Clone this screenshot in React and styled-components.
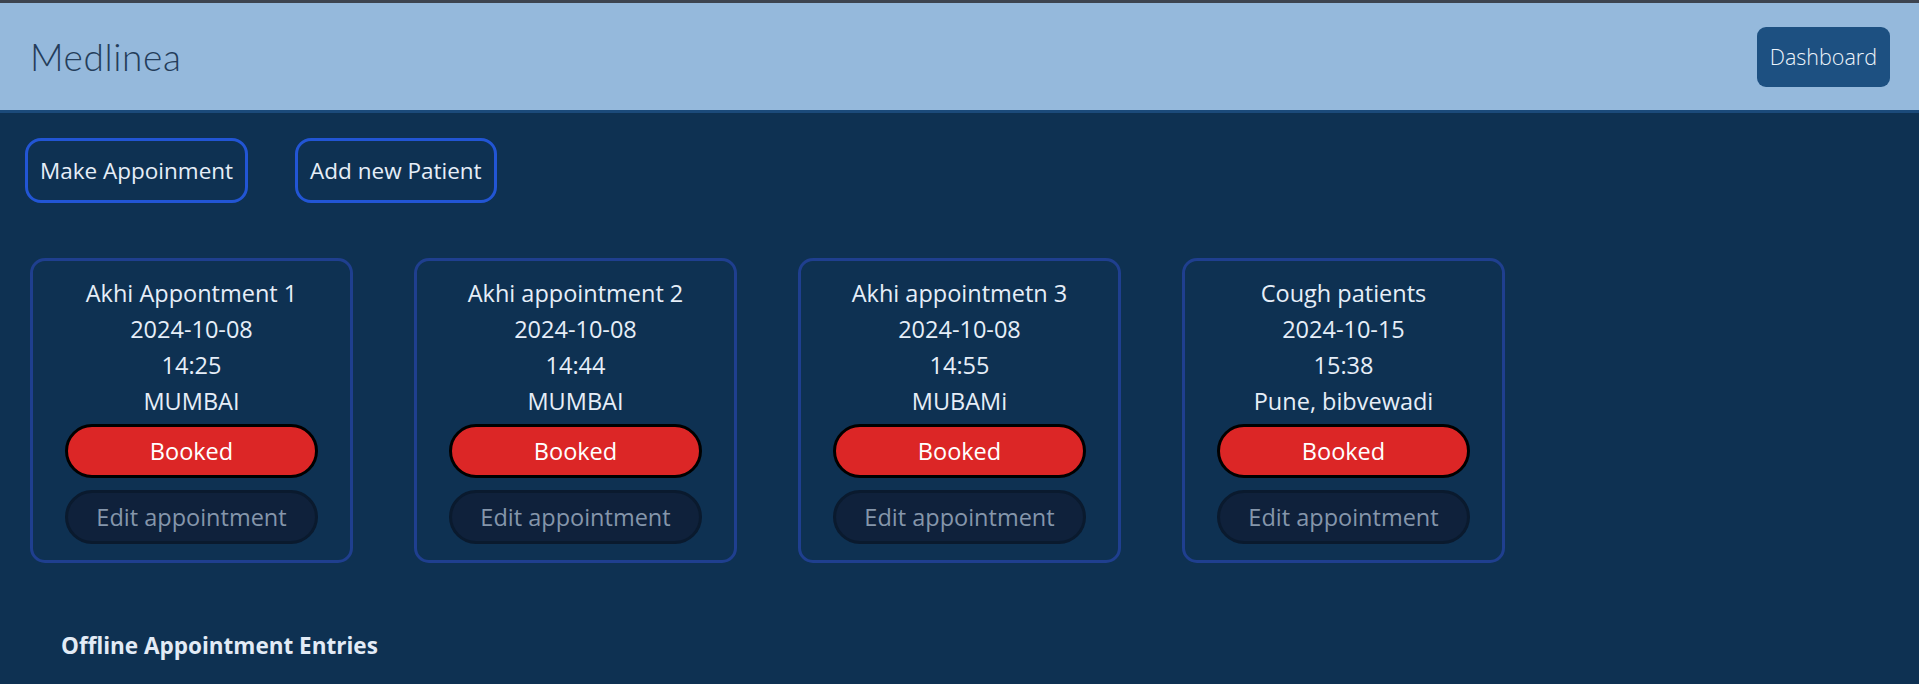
import React from "react";
import styled, { createGlobalStyle } from "styled-components";

const GlobalStyle = createGlobalStyle`
  html, body {
    margin: 0;
    padding: 0;
    background-color: #0e3152;
    font-family: "Open Sans", "Noto Sans", sans-serif;
  }
`;

const Page = styled.div`
  min-height: 684px;
  background-color: #0e3152;
  border-top: 3px solid #3d4450;
`;

const Navbar = styled.header`
  height: 110px;
  box-sizing: border-box;
  background-color: #95b9dc;
  border-bottom: 3px solid #1b4a7a;
  display: flex;
  flex-direction: row;
  align-items: center;
  justify-content: space-between;
  padding: 0 29px 0 30px;
`;

const Brand = styled.h1`
  margin: 0;
  font-family: "Lato", sans-serif;
  font-weight: 300;
  font-size: 37px;
  letter-spacing: 0.6px;
  color: #243d5a;
`;

const NavButton = styled.button`
  height: 60px;
  padding: 0 13px;
  border: none;
  border-radius: 9px;
  background-color: #1d5081;
  color: #eef4fb;
  font-family: "Open Sans", sans-serif;
  font-size: 21.5px;
  font-weight: 300;
`;

const Actions = styled.div`
  display: flex;
  flex-direction: row;
  gap: 47px;
  padding: 25px 0 0 25px;
`;

const OutlineButton = styled.button`
  height: 65px;
  padding: 0 12px;
  border: 3px solid #2255d4;
  border-radius: 16px;
  background: transparent;
  color: #e6eef8;
  font-family: "Open Sans", sans-serif;
  font-size: 22.5px;
`;

const CardRow = styled.div`
  display: flex;
  flex-direction: row;
  gap: 61px;
  padding: 55px 0 0 30px;
`;

const Card = styled.div`
  width: 323px;
  height: 305px;
  box-sizing: border-box;
  padding: 14px 32px 0;
  border: 3px solid #1f3f8f;
  border-radius: 15px;
  display: flex;
  flex-direction: column;
  align-items: stretch;
  text-align: center;
`;

const Line = styled.div`
  line-height: 36px;
  font-size: 23.5px;
  color: #e6eef8;
`;

const Pill = styled.button`
  height: 54px;
  width: 100%;
  border-radius: 27px;
  font-family: "Open Sans", sans-serif;
  font-size: 23.5px;
  border: 3px solid ${({ $booked }) => ($booked ? "#000000" : "#0a1a2e")};
  background-color: ${({ $booked }) => ($booked ? "#dc2626" : "#0f213b")};
  color: ${({ $booked }) => ($booked ? "#ffffff" : "#8596ab")};
  margin-top: ${({ $booked }) => ($booked ? "5px" : "12px")};
`;

const SectionTitle = styled.h3`
  margin: 0;
  padding: 67px 0 0 61px;
  font-size: 22.5px;
  font-weight: 700;
  color: #e2ebf6;
`;

const appointments = [
  { title: "Akhi Appontment 1", date: "2024-10-08", time: "14:25", place: "MUMBAI" },
  { title: "Akhi appointment 2", date: "2024-10-08", time: "14:44", place: "MUMBAI" },
  { title: "Akhi appointmetn 3", date: "2024-10-08", time: "14:55", place: "MUBAMi" },
  { title: "Cough patients", date: "2024-10-15", time: "15:38", place: "Pune, bibvewadi" },
];

const App = () => {
  return (
    <Page>
      <GlobalStyle />
      <Navbar>
        <Brand>Medlinea</Brand>
        <NavButton>Dashboard</NavButton>
      </Navbar>
      <Actions>
        <OutlineButton>Make Appoinment</OutlineButton>
        <OutlineButton>Add new Patient</OutlineButton>
      </Actions>
      <CardRow>
        {appointments.map((a) => (
          <Card key={a.title}>
            <Line>{a.title}</Line>
            <Line>{a.date}</Line>
            <Line>{a.time}</Line>
            <Line>{a.place}</Line>
            <Pill $booked>Booked</Pill>
            <Pill>Edit appointment</Pill>
          </Card>
        ))}
      </CardRow>
      <SectionTitle>Offline Appointment Entries</SectionTitle>
    </Page>
  );
};

export default App;
